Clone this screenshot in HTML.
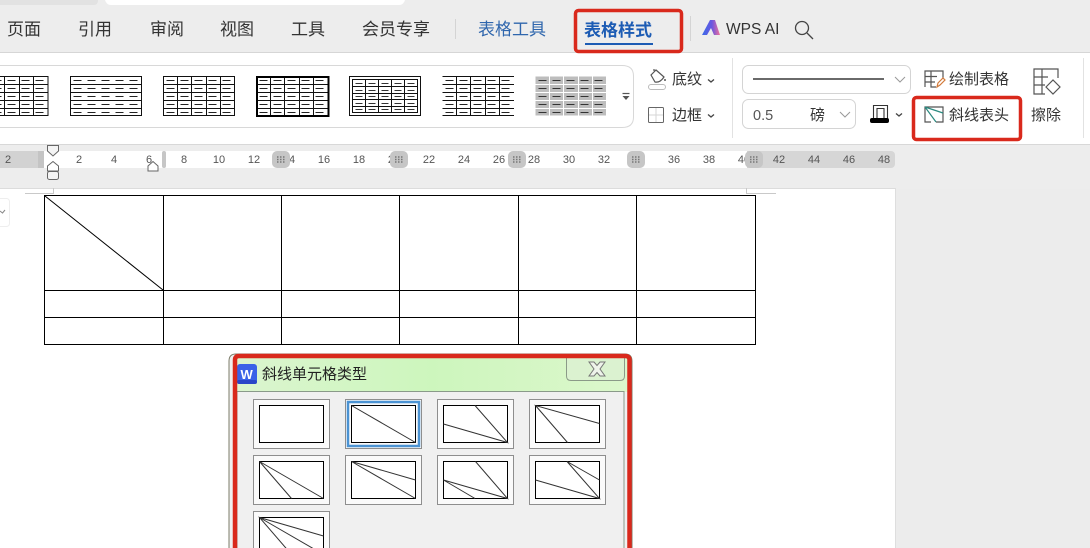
<!DOCTYPE html>
<html><head><meta charset="utf-8"><style>
html,body{margin:0;padding:0;width:1090px;height:548px;overflow:hidden;background:#ececec}
svg{display:block}
text{font-family:"Liberation Sans","Noto Sans CJK SC",sans-serif;fill:#333}
.t{font-size:17px}.s{font-size:15px}.r{font-size:11px;fill:#555;text-anchor:middle}
</style></head><body>
<svg width="1090" height="548" viewBox="0 0 1090 548" xmlns="http://www.w3.org/2000/svg">
<defs>
<g id="d" stroke="#222" fill="none" stroke-width="1"><path stroke-dasharray="8 6" d="M3 4H71M3 12H71M3 20H71M3 28H71M3 36H71"/></g>
<g id="h" stroke="#111" fill="none" stroke-width="1"><path d="M0 8H71.500M0 16H71.500M0 24H71.500M0 32H71.500"/></g>
<g id="v" stroke="#111" fill="none" stroke-width="1"><path d="M14 0V39M28 0V39M43 0V39M57 0V39"/></g>
<g id="c"><rect x=".5" y=".5" width="76" height="49" fill="#fafafa" stroke="#8e8e8e"/><rect x="6.500" y="6.500" width="64" height="37" fill="#fff" stroke="#000" stroke-width="1"/></g>
<linearGradient id="wa" x1="0" x2="1" y1="0" y2="0"><stop offset="0" stop-color="#3a6be8"/><stop offset=".55" stop-color="#6a56e0"/><stop offset="1" stop-color="#f0709a"/></linearGradient>
</defs>

<!-- tab strip -->
<rect width="1090" height="52" fill="#ededed"/>
<rect x="-5" y="-8" width="103" height="13" rx="4" fill="#e2e2e2"/>
<rect x="105" y="-10" width="300" height="15" rx="6" fill="#fff"/>
<text class="t" x="7" y="35">页面</text>
<text class="t" x="78" y="35">引用</text>
<text class="t" x="150" y="35">审阅</text>
<text class="t" x="220" y="35">视图</text>
<text class="t" x="291" y="35">工具</text>
<text class="t" x="362" y="35">会员专享</text>
<rect x="455" y="19" width="1" height="20" fill="#d4d4d4"/>
<text class="t" x="478" y="35" style="fill:#2f66ad">表格工具</text>
<text x="584" y="36" style="fill:#1d5cb4;font-size:17px;font-weight:700">表格样式</text>
<rect x="585" y="43" width="68" height="2" fill="#1d5cb4"/>
<rect x="690" y="16" width="1" height="25" fill="#d4d4d4"/>
<path d="M702 35L710 20H715L720 35H714L711 28L707 35Z" fill="url(#wa)"/>
<text x="726" y="34" style="font-size:15.500px;fill:#333">WPS AI</text>
<circle cx="802" cy="28" r="6.500" fill="none" stroke="#444" stroke-width="1.300"/>
<path d="M807 33L813 39" stroke="#444" stroke-width="1.300"/>

<!-- ribbon -->
<rect y="52" width="1090" height="92" fill="#fff"/>
<rect y="52" width="1090" height="1" fill="#d6d6d6"/>
<rect y="144" width="1090" height="1" fill="#d8d8d8"/>
<path d="M-5 65.500H622Q633.500 65.500 633.500 76V117Q633.500 127.500 622 127.500H-5" fill="#fff" stroke="#d8d8d8"/>

<!-- gallery -->
<g transform="translate(-23.500,76.500)" ><rect x="0" y="0" width="71.500" height="39" fill="#fff" stroke="#111"/><use href="#d"/><use href="#h"/><use href="#v"/></g>
<g transform="translate(70.500,76.500)"><rect width="71" height="39" fill="#fff" stroke="#111"/><use href="#d"/><use href="#h"/></g>
<g transform="translate(163.500,76.500)"><rect width="71" height="39" fill="#fff" stroke="#111"/><use href="#d"/><use href="#h"/><use href="#v"/></g>
<g transform="translate(256.500,76.500)"><use href="#d"/><use href="#h"/><use href="#v"/></g>
<rect x="257" y="77" width="71.500" height="39" fill="none" stroke="#000" stroke-width="2"/>
<g transform="translate(349.500,76.500)"><rect width="71" height="39" fill="#fff" stroke="#111"/><rect x="3" y="3" width="65" height="33" fill="none" stroke="#111"/><path d="M3 10H68M3 17H68M3 23H68M3 30H68M16 3V36M29 3V36M42 3V36M55 3V36" stroke="#111"/><path stroke="#333" stroke-dasharray="7 6" d="M6 7H68M6 14H68M6 20H68M6 27H68M6 33H68"/></g>
<g transform="translate(442.500,76.500)"><use href="#d"/><use href="#h"/><use href="#v"/><path d="M0 0H71.500M0 39H71.500" stroke="#111"/></g>
<g transform="translate(535.500,76.500)"><rect width="70.500" height="39" fill="#bdbdbd"/><path d="M14 0V39M28 0V39M43 0V39M57 0V39M0 8H71M0 16H71M0 24H71M0 32H71" stroke="#fff"/><path stroke-dasharray="8 6" d="M3 4H71M3 12H71M3 20H71M3 28H71M3 36H71" stroke="#333"/></g>
<path d="M622.500 93.500H629.500" stroke="#555" stroke-width="1.200"/><path d="M622.500 96L626 100L629.500 96Z" fill="#555"/>

<!-- shading / border -->
<path d="M651 75L656 70L664 77Q660 83 655 82ZM654 71V69" fill="none" stroke="#555" stroke-width="1.200"/>
<circle cx="665" cy="80" r="1" fill="#555"/>
<rect x="648.500" y="84.500" width="17" height="5" rx="2.500" fill="none" stroke="#bbb"/>
<text class="s" x="672" y="84">底纹</text>
<path d="M708 79.500L711 82L714 79.500" fill="none" stroke="#444" stroke-width="1.300"/>
<rect x="648.500" y="107.500" width="15" height="15" rx="1" fill="none" stroke="#666"/>
<path d="M656 108V122M649 115H663" stroke="#d5d5d5"/>
<text class="s" x="672" y="120">边框</text>
<path d="M708 114.500L711 117L714 114.500" fill="none" stroke="#444" stroke-width="1.300"/>
<rect x="732" y="58" width="1" height="80" fill="#e2e2e2"/>

<!-- line controls -->
<rect x="742.500" y="65.500" width="168" height="28" rx="6" fill="#fff" stroke="#d4d4d4"/>
<path d="M753 79H884" stroke="#111" stroke-width="1.200"/>
<path d="M895 77L900 82L905 77" fill="none" stroke="#999"/>
<rect x="742.500" y="99.500" width="113" height="29" rx="6" fill="#fff" stroke="#d4d4d4"/>
<text x="753" y="120" style="font-size:14.500px;fill:#555">0.5</text>
<text class="s" x="810" y="120">磅</text>
<path d="M840 112L845 117L850 112" fill="none" stroke="#999"/>
<path d="M873.500 119V105.500H887.500V119M877 119V108.500H884V119" fill="none" stroke="#333" stroke-width="1.100"/>
<rect x="870" y="118" width="19" height="5" rx="2" fill="#000"/>
<path d="M896 113.500L899 116L902 113.500" fill="none" stroke="#444" stroke-width="1.300"/>

<!-- draw table -->
<path d="M925 87V71H943V78M925 76.500H937M925 82H935M931 71V87H936" fill="none" stroke="#555" stroke-width="1.200"/>
<path d="M937 87L938 83L943 78L945 80L940 85Z" fill="none" stroke="#d27a3a" stroke-width="1.200"/>
<text class="s" x="949" y="84">绘制表格</text>
<!-- diagonal header -->
<path d="M931 107H943V122H936M931 122H925V107H931" fill="none" stroke="#555" stroke-width="1.200"/>
<path d="M925 107L936 122M925 107L943 113" fill="none" stroke="#2b8a80" stroke-width="1.200"/>
<text class="s" x="949" y="120">斜线表头</text>
<!-- erase -->
<path d="M1045 94H1034V69H1058V78M1034 77H1048M1034 85H1045M1042 69V94" fill="none" stroke="#555" stroke-width="1.200"/>
<path d="M1046 87L1053 80L1060 87L1053 94Z" fill="none" stroke="#555" stroke-width="1.200"/>
<text class="s" x="1031" y="120">擦除</text>
<rect x="1083" y="58" width="1" height="80" fill="#e2e2e2"/>

<!-- ruler -->
<rect y="145" width="1090" height="44" fill="#ededed"/>
<rect x="0" y="151" width="895" height="17" fill="#d6d6d6" rx="4"/>
<rect x="0" y="151" width="38" height="17" fill="#d2d2d2"/>
<rect x="38" y="151" width="6" height="17" fill="#c4c4c4"/>
<rect x="44" y="151" width="703" height="17" fill="#fff"/>
<text class="r" x="8" y="163">2</text><text class="r" x="79" y="163">2</text><text class="r" x="114" y="163">4</text><text class="r" x="149" y="163">6</text><text class="r" x="184" y="163">8</text><text class="r" x="219" y="163">10</text><text class="r" x="254" y="163">12</text><text class="r" x="289" y="163">14</text><text class="r" x="324" y="163">16</text><text class="r" x="359" y="163">18</text><text class="r" x="394" y="163">20</text><text class="r" x="429" y="163">22</text><text class="r" x="464" y="163">24</text><text class="r" x="499" y="163">26</text><text class="r" x="534" y="163">28</text><text class="r" x="569" y="163">30</text><text class="r" x="604" y="163">32</text><text class="r" x="639" y="163">34</text><text class="r" x="674" y="163">36</text><text class="r" x="709" y="163">38</text><text class="r" x="744" y="163">40</text><text class="r" x="779" y="163">42</text><text class="r" x="814" y="163">44</text><text class="r" x="849" y="163">46</text><text class="r" x="884" y="163">48</text>
<rect x="162" y="151" width="4" height="17" rx="2" fill="#c6c6c6"/>
<rect x="272" y="151" width="18" height="17" rx="5" fill="#c6c6c6"/>
<rect x="390" y="151" width="18" height="17" rx="5" fill="#c6c6c6"/>
<rect x="508" y="151" width="18" height="17" rx="5" fill="#c6c6c6"/>
<rect x="627" y="151" width="18" height="17" rx="5" fill="#c6c6c6"/>
<rect x="745" y="151" width="18" height="17" rx="5" fill="#c6c6c6"/>
<path stroke="#777" stroke-width="1.500" stroke-dasharray="1.500 1.500" d="M277 157H286M277 159.500H286M277 162H286M395 157H404M395 159.500H404M395 162H404M513 157H522M513 159.500H522M513 162H522M632 157H641M632 159.500H641M632 162H641M750 157H759M750 159.500H759M750 162H759"/>
<g fill="#f4f4f4" stroke="#666" stroke-width="1"><path d="M47.500 145.500H58.500V151L53 156L47.500 151Z"/><path d="M47.500 171V166L53 161.500L58.500 166V171Z" fill="#fff"/><rect x="47.500" y="171.500" width="11" height="8" rx="2"/><path d="M148 171V166L153 161.500L158 166V171Z" fill="#fff"/></g>

<!-- document -->
<rect y="188" width="895" height="360" fill="#fff"/>
<rect y="188" width="895" height="1" fill="#dcdcdc"/>
<rect x="895" y="188" width="1" height="360" fill="#dedede"/>
<path d="M25 193.500H53.500V188M746.500 188V193.500H776" fill="none" stroke="#c9c9c9"/>
<rect x="-6" y="198.500" width="15.500" height="28" rx="3" fill="#fff" stroke="#eee"/>
<path d="M0 211L2.500 213L5 210" fill="none" stroke="#888"/>
<path d="M44.500 195.500H755.500V344.500H44.500ZM44.500 290.500H755.500M44.500 317.500H755.500M163.500 195.500V344.500M281.500 195.500V344.500M399.500 195.500V344.500M518.500 195.500V344.500M636.500 195.500V344.500M45 196L163 290" fill="none" stroke="#000" stroke-width="1"/>

<!-- dialog -->
<defs><linearGradient id="g" x1="0" x2="1" y1="0" y2="0"><stop offset="0" stop-color="#dbf5cf"/><stop offset=".5" stop-color="#cdf6bd"/><stop offset="1" stop-color="#dcf7cc"/></linearGradient></defs>
<path d="M229 548V361Q229 354 236 354H625Q632 354 632 361V548" fill="#f0f0f0" stroke="#7d7d6a"/>
<rect x="236" y="356" width="392" height="36" fill="url(#g)"/>
<rect x="237" y="391.500" width="387" height="160" fill="#f0f0f0" stroke="#8a9a8a"/>
<path d="M566.500 356V376Q566.500 380.500 571 380.500H620Q624.500 380.500 624.500 376V356" fill="#dbf2d0" stroke="#8b9a88"/>
<path d="M589 362H594L597 365.500L600 362H605L600 369L605 376H600L597 372.500L594 376H589L594 369Z" fill="#eef3ea" stroke="#777" stroke-width="1"/>
<rect x="237" y="364" width="20" height="20" rx="3" fill="#3a62e8"/>
<rect x="237" y="380" width="20" height="4" rx="2" fill="#2a45c8"/>
<text x="240.500" y="379" style="font-size:13px;font-weight:700;fill:#fff">W</text>
<text x="262" y="379" style="font-size:15px;fill:#222">斜线单元格类型</text>

<g stroke="#333" stroke-width="1" fill="none">
<g transform="translate(253,399)"><use href="#c"/></g>
<g transform="translate(345,399)"><use href="#c"/><rect x="3" y="3" width="71" height="44" stroke="#4b93d3" stroke-width="2.500"/><path d="M6.500 6.500L70.500 43.500"/></g>
<g transform="translate(437,399)"><use href="#c"/><path d="M6.500 25L70.500 43.500L38 6.500"/></g>
<g transform="translate(529,399)"><use href="#c"/><path d="M70.500 24.500L6.500 6.500L38.500 43.500"/></g>
<g transform="translate(253,455)"><use href="#c"/><path d="M70.500 43.500L6.500 6.500L38.500 43.500"/></g>
<g transform="translate(345,455)"><use href="#c"/><path d="M70.500 25L6.500 6.500L70.500 43.500"/></g>
<g transform="translate(437,455)"><use href="#c"/><path d="M38.500 6.500L70.500 43.500L6.500 25L38 43.500"/></g>
<g transform="translate(529,455)"><use href="#c"/><path d="M70.500 25L38 6.500L70.500 43.500L6.500 25"/></g>
<g transform="translate(253,511)"><use href="#c"/><path d="M70.500 25L6.500 6.500L38.500 43.500M6.500 6.500L70.500 43.500"/></g>
</g>

<!-- red highlights -->
<g fill="none" stroke="#d9291c">
<rect x="575.500" y="10.500" width="106" height="41" rx="3" stroke-width="3.500"/>
<rect x="913.500" y="97.500" width="107" height="42" rx="3" stroke-width="3.500"/>
<path d="M235 548V360Q235 356 239 356H625Q629.500 356 629.500 360V548" stroke-width="4.500"/>
</g>
</svg>
</body></html>
